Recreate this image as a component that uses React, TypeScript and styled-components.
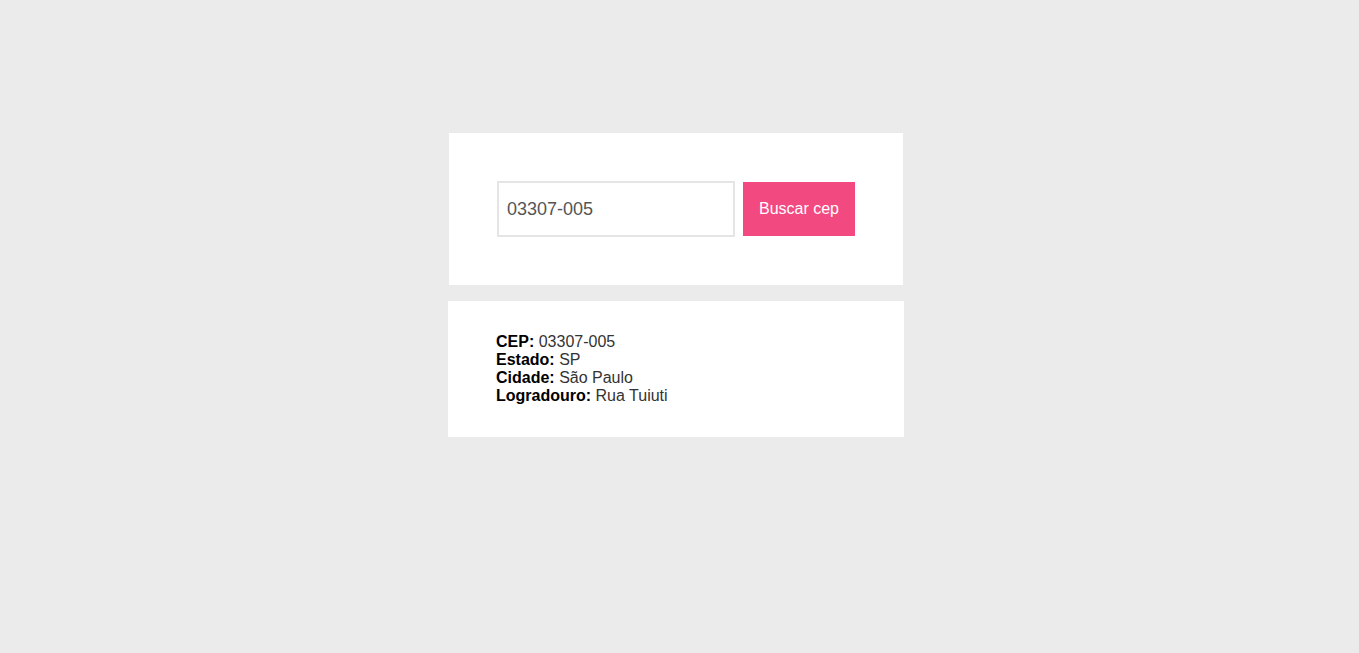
import styled, { createGlobalStyle } from "styled-components";

const GlobalStyle = createGlobalStyle`
  * {
    box-sizing: border-box;
  }
  body {
    margin: 0;
    background-color: #ebebeb;
    font-family: "Liberation Sans", Arial, sans-serif;
  }
`;

const Page = styled.main`
  min-height: 100vh;
  display: flex;
  flex-direction: column;
  align-items: center;
  padding: 133px 7px 0 0;
  gap: 16px;
`;

const SearchCard = styled.form`
  width: 454px;
  background-color: #fff;
  padding: 48px;
  display: flex;
  align-items: center;
  gap: 8px;
`;

const Input = styled.input`
  width: 238px;
  height: 56px;
  border: 2px solid #e5e5e5;
  padding: 0 8px;
  font-family: "Liberation Sans", Arial, sans-serif;
  font-size: 18px;
  color: #555;
  outline: none;
`;

const Button = styled.button`
  width: 112px;
  height: 54px;
  border: none;
  background-color: #f34981;
  color: #fff;
  font-family: "Liberation Sans", Arial, sans-serif;
  font-size: 16px;
  cursor: pointer;
`;

const ResultCard = styled.div`
  width: 456px;
  background-color: #fff;
  padding: 32px 48px;
`;

const Line = styled.p`
  margin: 0;
  font-size: 16px;
  line-height: 18px;
  color: #333;
  strong {
    color: #000;
  }
`;

const address = [
  { label: "CEP", value: "03307-005" },
  { label: "Estado", value: "SP" },
  { label: "Cidade", value: "São Paulo" },
  { label: "Logradouro", value: "Rua Tuiuti" },
];

const App = (): JSX.Element => {
  return (
    <>
      <GlobalStyle />
      <Page>
        <SearchCard onSubmit={(e) => e.preventDefault()}>
          <Input defaultValue="03307-005" />
          <Button type="submit">Buscar cep</Button>
        </SearchCard>
        <ResultCard>
          {address.map((item) => (
            <Line key={item.label}>
              <strong>{item.label}:</strong> {item.value}
            </Line>
          ))}
        </ResultCard>
      </Page>
    </>
  );
};

export default App;
